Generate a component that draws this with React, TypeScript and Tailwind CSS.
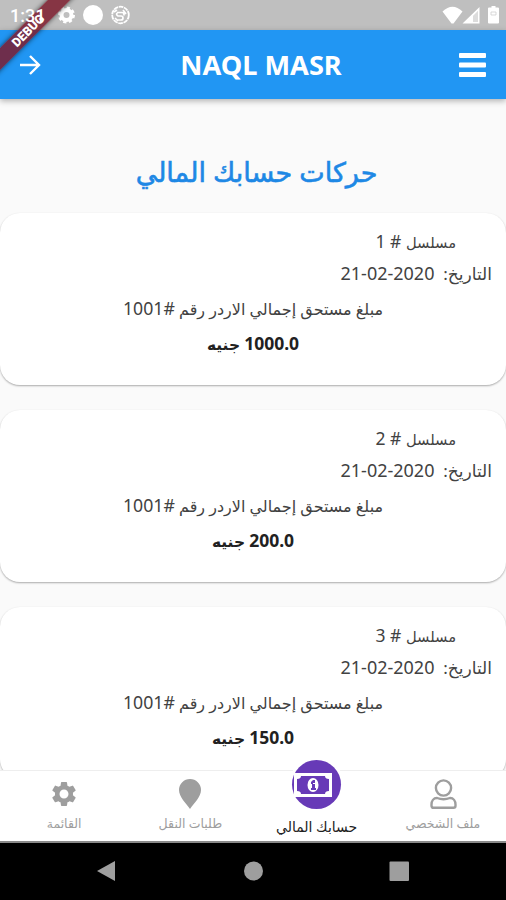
import type { ReactNode } from "react";

const transactions = [
  { id: 1, date: "21-02-2020", order: 1001, amount: "1000.0" },
  { id: 2, date: "21-02-2020", order: 1001, amount: "200.0" },
  { id: 3, date: "21-02-2020", order: 1001, amount: "150.0" },
];

const StatusBar = () => (
  <div className="flex h-[30px] shrink-0 items-center bg-[#bfbfbf] pl-[10px] pr-[7px] text-white">
    <span className="relative z-30 w-[47px] pt-[1px] font-[Roboto] text-[18px] leading-[30px] font-medium">1:31</span>
    <svg className="h-[20px] w-[75px]" viewBox="0 0 75 20" fill="none">
      <circle cx="9.500" cy="10" r="5" stroke="#fff" strokeWidth="4" />
      <circle cx="9.500" cy="10" r="7.3" stroke="#fff" strokeWidth="2.4" strokeDasharray="3.2 2.53" />
      <circle cx="36" cy="10" r="10" fill="#fff" />
      <circle cx="63.500" cy="10" r="8.3" stroke="#fff" strokeWidth="1.8" strokeDasharray="4.6 .7" />
      <path d="M60 7.500h5q2 0 2 2v1M60 8q-1 2 1 3h3q2 0 2 2t-2 2h-4M57 7l3-2M58 13l3 3M66 5l3 4" stroke="#fff" strokeWidth="1.700" />
    </svg>
    <svg className="ml-auto h-[20px] w-[57px]" viewBox="0 0 57 20" fill="#fff">
      <path d="M.5 6.500Q10.500-3 20.500 6.500L11.500 18.500h-2z" />
      <path fillRule="evenodd" d="M20.500 18.500L37.500 2v16.500zM31 11v6h5V6z" />
      <path fillOpacity=".45" d="M31 11v6h5V6z" />
      <path d="M47 2.500h2.500V1h4v1.500H56q1 0 1 1v14q0 1-1 1h-9q-1 0-1-1v-14q0-1 1-1z" />
      <path d="M49 7h5v3h-5z" stroke="#cfcfcf" strokeWidth=".8" />
    </svg>
  </div>
);

const DebugBanner = () => (
  <div className="absolute top-0 left-0 z-20 h-[80px] w-[80px] overflow-hidden">
    <div className="absolute top-[22px] left-[-31px] flex h-[16px] w-[120px] -rotate-45 items-center justify-center bg-[#7b1c2e]/85 pr-[2px] font-[Roboto] text-[12.5px] font-black text-white shadow-[0_0_5px_rgba(0,0,0,0.6)]">
      DEBUG
    </div>
  </div>
);

const Header = () => (
  <header className="z-10 flex h-[69px] shrink-0 items-center bg-[#2196f3] pr-[20px] pl-[20px] text-white shadow-[0_2px_6px_rgba(0,0,0,0.3)]">
    <svg className="h-[20px] w-[27px]" viewBox="0 0 27 20" fill="none" stroke="#fff" strokeWidth="2.4">
      <path d="M0 10h19M10 1l9 9-9 9" />
    </svg>
    <h1 className="flex-1 pt-[1px] pl-[16px] text-center text-[27.2px] leading-[36px] font-bold">NAQL MASR</h1>
    <svg className="h-[24px] w-[27px]" viewBox="0 0 27 24" fill="#fff">
      <rect width="27" height="5" rx="1" />
      <rect y="9.500" width="27" height="5" rx="1" />
      <rect y="19" width="27" height="5" rx="1" />
    </svg>
  </header>
);

const TransactionCard = ({ id, date, order, amount }: (typeof transactions)[number]) => (
  <article
    dir="rtl"
    className="h-[172px] shrink-0 rounded-[20px] bg-white pt-[12px] text-[17px] text-[#424242] shadow-[0_1px_2px_rgba(0,0,0,0.32)]"
  >
    <p className="h-[32px] pr-[50px] text-[17.5px] leading-[32px]">
      <span className="text-[14.7px]">مسلسل</span> # {id}
    </p>
    <p className="h-[32px] pr-[14px] leading-[32px]">
      التاريخ:&nbsp; <bdi dir="ltr" className="text-[18px]">{date}</bdi>
    </p>
    <p className="h-[38px] text-center text-[16px] leading-[38px]">
      مبلغ مستحق إجمالي الاردر رقم <span className="text-[17.7px]">#{order}</span>
    </p>
    <p className="h-[32px] text-center text-[15.500px] leading-[32px] font-bold text-[#212121]">
      <span className="text-[17.500px]">{amount}</span> جنيه
    </p>
  </article>
);

const NavItem = ({ label, children }: { label: string; children: ReactNode }) => (
  <div className="flex flex-1 flex-col items-center text-[#9e9e9e]">
    <div className="flex h-[46px] items-center">{children}</div>
    <span dir="rtl" className="text-[12.500px] leading-[14px] whitespace-nowrap">{label}</span>
  </div>
);

const BottomNav = () => (
  <nav className="z-10 flex h-[71px] shrink-0 border-t border-[#eeeeee] bg-white pl-px">
    <NavItem label="القائمة">
      <svg className="h-[30px] w-[30px]" viewBox="0 0 24 24" fill="currentColor">
        <path d="M19.140 12.940c.04-.3.060-.61.060-.94 0-.32-.020-.64-.070-.94l2.030-1.580a.49.490 0 0 0 .12-.61l-1.920-3.320a.488.488 0 0 0-.59-.22l-2.390.96c-.5-.38-1.030-.7-1.620-.94l-.36-2.540a.484.484 0 0 0-.48-.41h-3.840c-.24 0-.43.17-.47.410l-.36 2.540c-.59.240-1.130.570-1.620.940l-2.390-.96c-.22-.080-.47 0-.59.220L2.740 8.870c-.12.210-.080.470.12.610l2.030 1.580c-.050.3-.090.630-.090.940s.020.640.070.940l-2.030 1.580a.49.490 0 0 0-.12.610l1.920 3.320c.12.220.370.290.590.220l2.390-.96c.5.380 1.030.7 1.620.940l.36 2.540c.050.240.240.410.480.410h3.840c.24 0 .440-.17.470-.41l.36-2.540c.59-.24 1.130-.56 1.620-.94l2.390.960c.22.080.470 0 .590-.22l1.920-3.320c.12-.22.070-.47-.12-.61l-2.010-1.580zM12 15.600c-1.980 0-3.600-1.620-3.600-3.600s1.620-3.600 3.600-3.600 3.600 1.620 3.600 3.600-1.620 3.600-3.600 3.600z" />
      </svg>
    </NavItem>
    <NavItem label="طلبات النقل">
      <svg className="h-[30px] w-[22px]" viewBox="0 0 22 30" fill="currentColor">
        <path d="M11 0a11 11 0 0 1 11 11c0 7-7 13-11 19C7 24 0 18 0 11A11 11 0 0 1 11 0z" />
      </svg>
    </NavItem>
    <div className="flex flex-1 flex-col items-center text-[#212121]">
      <div className="-mt-[14px] flex h-[55px] w-[55px] items-center justify-center rounded-full bg-white">
        <div className="flex h-[49px] w-[49px] items-center justify-center rounded-full bg-[#673ab7]">
          <svg className="mr-[7px] h-[24px] w-[38px] shrink-0" viewBox="0 0 38 24">
            <path fill="#fff" fillRule="evenodd" d="M0 0h38v24H0zM7 3Q7 6 3 6v12q4 0 4 3h24q0-3 4-3V6q-4 0-4-3z" />
            <ellipse cx="19" cy="12" rx="5.500" ry="7" fill="#fff" />
            <path fill="#673ab7" d="M17 9l2-2h2v3h-2v1h2v4h1v2h-5v-2h1v-4h-1z" />
          </svg>
        </div>
      </div>
      <span dir="rtl" className="mt-[7px] text-[14px] leading-[16px] whitespace-nowrap">حسابك المالي</span>
    </div>
    <NavItem label="ملف الشخصي">
      <svg className="ml-[1px] h-[30px] w-[27px]" viewBox="0 0 27 30" fill="none" stroke="currentColor" strokeWidth="2.400">
        <circle cx="13.500" cy="9" r="7.600" />
        <path d="M7 19c4 1.500 9 1.500 13 0 3.500 0 5.500 3 5.500 6.500v1.300q0 2-2 2h-20q-2 0-2-2v-1.300C1.500 22 3.500 19 7 19z" />
      </svg>
    </NavItem>
  </nav>
);

const SystemNav = () => (
  <div className="flex h-[59px] shrink-0 items-center border-t-2 border-[#8a8a8a] bg-black pb-[2px] pl-[96px]">
    <svg className="h-[22px] w-[315px]" viewBox="0 0 315 22" fill="#9e9e9e">
      <path d="M1 11L19 1v20z" />
      <circle cx="157.500" cy="11" r="9.500" />
      <rect x="293.500" y="1.500" width="19.500" height="19.500" rx="1" />
    </svg>
  </div>
);

export default function App() {
  return (
    <div className="relative flex h-[900px] w-[506px] flex-col overflow-hidden bg-[#fafafa] font-['Noto_Sans','DejaVu_Sans',sans-serif]">
      <StatusBar />
      <Header />
      <main className="flex min-h-0 flex-1 flex-col overflow-hidden">
        <h2 dir="rtl" className="mt-[49px] h-[65px] shrink-0 pl-[7px] text-center text-[27px] leading-[47px] text-[#1e88e5] [-webkit-text-stroke:0.6px_#1e88e5]">
          حركات حسابك المالي
        </h2>
        <div className="flex flex-col gap-[25px]">
          {transactions.map((transaction) => (
            <TransactionCard key={transaction.id} {...transaction} />
          ))}
        </div>
      </main>
      <BottomNav />
      <SystemNav />
      <DebugBanner />
    </div>
  );
}
